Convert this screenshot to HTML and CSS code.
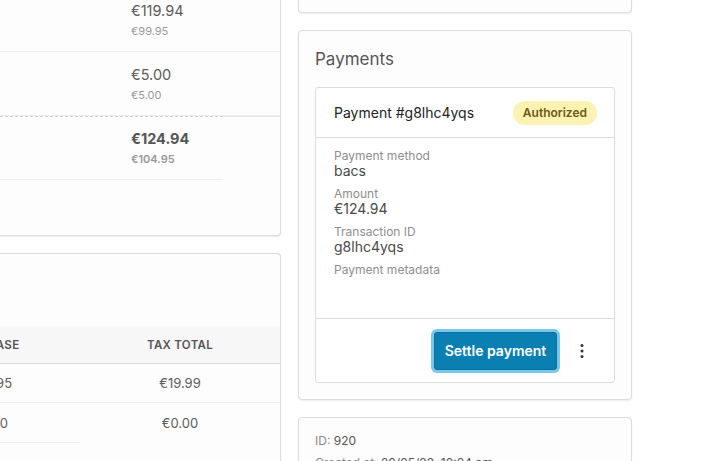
FILE: index.html
```html
<!DOCTYPE html>
<html>
<head>
<meta charset="utf-8">
<link rel="stylesheet" href="styles.css">
</head>
<body>
<div class="page">
  <div class="col left">
    <div class="card lines">
      <div class="line first">
        <div class="cell main">
          <div class="price">€119.94</div>
          <div class="sub">€99.95</div>
        </div>
      </div>
      <div class="line">
        <div class="cell main">
          <div class="price">€5.00</div>
          <div class="sub">€5.00</div>
        </div>
      </div>
      <div class="line total">
        <div class="cell main dashed">
          <div class="price strong">€124.94</div>
          <div class="sub strong">€104.95</div>
        </div>
        <div class="cell rest"></div>
      </div>
    </div>
    <div class="card taxes">
      <div class="tax-table">
        <div class="tax-row head">
          <div class="tc">TAX BASE</div>
          <div class="tc">TAX TOTAL</div>
        </div>
        <div class="tax-row">
          <div class="tc">€99.95</div>
          <div class="tc">€19.99</div>
        </div>
        <div class="tax-row last">
          <div class="tc">€5.00</div>
          <div class="tc">€0.00</div>
        </div>
      </div>
      <div class="tax-foot"></div>
    </div>
  </div>
  <div class="col right">
    <div class="card stub"></div>
    <div class="card payments">
      <h2 class="title">Payments</h2>
      <div class="payment">
        <div class="pay-head">
          <span class="pay-name">Payment #g8lhc4yqs</span>
          <span class="badge">Authorized</span>
        </div>
        <div class="pay-body">
          <div class="field"><div class="label">Payment method</div><div class="value">bacs</div></div>
          <div class="field"><div class="label">Amount</div><div class="value">€124.94</div></div>
          <div class="field"><div class="label">Transaction ID</div><div class="value">g8lhc4yqs</div></div>
          <div class="field meta"><div class="label">Payment metadata</div></div>
        </div>
        <div class="pay-foot">
          <button class="btn">Settle payment</button>
          <button class="kebab" aria-label="More">
            <svg width="4" height="16" viewBox="0 0 4 16"><circle cx="2" cy="2.5" r="1.5" fill="#333"/><circle cx="2" cy="8" r="1.5" fill="#333"/><circle cx="2" cy="13.5" r="1.5" fill="#333"/></svg>
          </button>
        </div>
      </div>
    </div>
    <div class="card info">
      <div class="info-line"><span class="k">ID:</span> <span class="v">920</span></div>
      <div class="info-line"><span class="k">Created at:</span> <span class="v">20/05/22, 10:04 am</span></div>
    </div>
  </div>
</div>
</body>
</html>
```

FILE: styles.css
```css
* { box-sizing: border-box; }
html, body { margin: 0; padding: 0; background: #ffffff; }
body {
  font-family: Inter, "Noto Sans", "DejaVu Sans", sans-serif;
  color: #555;
  width: 714px;
  height: 461px;
  overflow: hidden;
}
.page {
  display: grid;
  grid-template-columns: 281px 334px;
  column-gap: 17px;
  align-items: start;
}
.col { display: flex; flex-direction: column; gap: 17px; }

.card {
  background: #fdfdfd;
  border: 1px solid #dcdcdc;
  border-radius: 4px;
  box-shadow: 0 1px 2px rgba(0,0,0,0.07);
}

/* left: order lines */
.left .card { border-left: none; border-top-left-radius: 0; border-bottom-left-radius: 0; }
.lines { border-top: none; border-top-left-radius: 0; border-top-right-radius: 0; height: 236px; overflow: hidden; }
.line { display: flex; height: 64px; border-bottom: 1px solid #eeeeee; }
.line.first { height: 52px; }
.line.first .cell.main { padding-top: 2px; }
.line.total { border-bottom: none; height: auto; }
.cell.main { width: 223px; padding: 14px 0 0 131px; }
.cell.rest { flex: 1; }
.cell.dashed { border-top: 1px dashed #cfcfcf; border-bottom: 1px solid #eeeeee; height: 64px; padding-top: 13px; }
.line.total .cell.rest { border-top: 1px solid #e6e6e6; }
.price { font-size: 14.5px; line-height: 18px; color: #5c5c5c; }
.sub { font-size: 11px; line-height: 14px; margin-top: 4px; color: #9a9a9a; }
.price.strong { font-weight: 700; color: #555; font-size: 14.5px; }
.sub.strong { font-weight: 600; color: #9a9a9a; }

/* left: taxes */
.taxes { height: 230px; overflow: hidden; padding-top: 72px; }
.tax-table { margin-left: -105px; }
.tax-row { display: grid; grid-template-columns: 190px 190px; height: 39px; align-items: center; border-bottom: 1px solid #eeeeee; font-size: 13px; color: #5c5c5c; }
.tax-row.head { background: #f7f7f7; border-bottom: 1px solid #d9d9d9; height: 38px; font-size: 11.5px; font-weight: 600; letter-spacing: 0.3px; color: #555; }
.tax-row.last { border-bottom: none; }
.tc { text-align: center; }
.tax-foot { width: 80px; border-top: 1px solid #eeeeee; }

/* right */
.stub { height: 13px; border-top: none; border-top-left-radius: 0; border-top-right-radius: 0; }
.payments { padding: 18px 16px 16px 16px; }
.title { margin: 0 0 18px 0; font-size: 17px; line-height: 20px; font-weight: 400; color: #565656; }
.payment { background: #fff; border: 1px solid #dddddd; border-radius: 3px; }
.pay-head { height: 50px; display: flex; align-items: center; justify-content: space-between; padding: 0 17px 0 18px; border-bottom: 1px solid #dddddd; }
.pay-name { font-size: 14px; color: #222; }
.badge { background: #fcf2b2; color: #6b5b12; font-size: 12px; font-weight: 600; line-height: 24px; height: 24px; padding: 0 10px; border-radius: 12px; }
.pay-body { padding: 11px 18px 41px 18px; border-bottom: 1px solid #dddddd; }
.field { margin-bottom: 8px; }
.field.meta { margin-bottom: 0; }
.label { font-size: 12px; line-height: 14px; color: #8e8e8e; }
.value { font-size: 14px; line-height: 16px; color: #4a4a4a; }
.pay-foot { height: 63px; display: flex; align-items: center; justify-content: flex-end; padding: 0 20px 0 0; gap: 13px; }
.btn {
  font-family: inherit;
  font-size: 14px;
  font-weight: 600;
  color: #fff;
  background: #0a7fb2;
  border: 1px solid #0a6f9c;
  border-radius: 3px;
  height: 38px;
  width: 123px;
  padding: 0;
  box-shadow: 0 0 0 3px #79c8ec;
  cursor: pointer;
}
.kebab { background: none; border: none; width: 24px; height: 36px; padding: 0; display: flex; align-items: center; justify-content: center; }

.info { padding: 15px 16px; height: 80px; }
.info-line { font-size: 12px; line-height: 15px; margin-bottom: 7px; }
.info-line .k { color: #8a8a8a; }
.info-line .v { color: #555; }
```
